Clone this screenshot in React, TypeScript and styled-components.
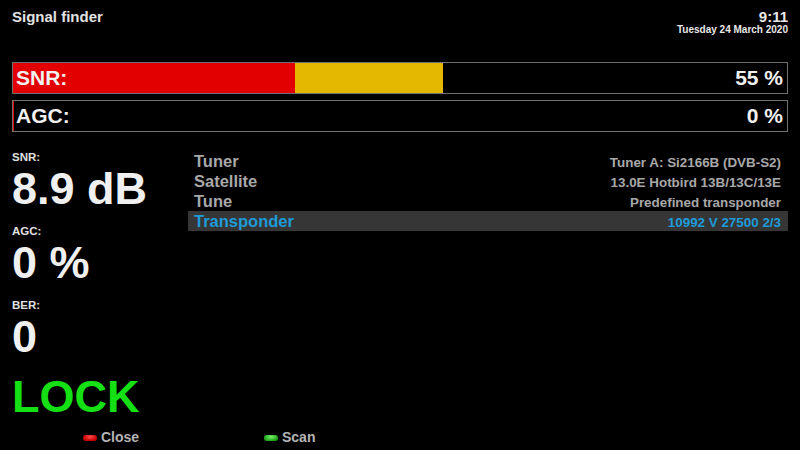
import React from 'react';
import styled, { createGlobalStyle } from 'styled-components';

const GlobalStyle = createGlobalStyle`
  html, body {
    margin: 0;
    padding: 0;
    background: #000;
  }
  body {
    font-family: 'Liberation Sans', Arial, sans-serif;
    font-weight: bold;
  }
`;

const Screen = styled.div`
  display: flex;
  flex-direction: column;
  box-sizing: border-box;
  width: 800px;
  height: 450px;
  padding: 0 12px 6px;
  background: #000;
  color: #e8e8e8;
  overflow: hidden;
`;

const Header = styled.header`
  display: flex;
  justify-content: space-between;
  align-items: flex-start;
  box-sizing: border-box;
  height: 62px;
  padding-top: 9px;
`;

const Title = styled.div`
  font-size: 15px;
  line-height: 15px;
  color: #e2e2e2;
`;

const Clock = styled.div`
  display: flex;
  flex-direction: column;
  align-items: flex-end;
  color: #e8e8e8;
`;

const Time = styled.div`
  font-size: 15px;
  line-height: 15px;
`;

const DateLine = styled.div`
  margin-top: 1px;
  font-size: 10px;
  line-height: 10px;
`;

const Bars = styled.section`
  display: flex;
  flex-direction: column;
  gap: 6px;
`;

const Bar = styled.div`
  position: relative;
  display: flex;
  align-items: center;
  justify-content: space-between;
  box-sizing: border-box;
  height: 32px;
  padding: 0 4px 0 3px;
  border: 1px solid #707070;
  font-size: 21px;
  color: #f0f0f0;
`;

const Track = styled.div`
  position: absolute;
  inset: 0;
  display: flex;
`;

const Segment = styled.div<{ $color: string }>`
  height: 100%;
  background: ${({ $color }) => $color};
`;

const BarText = styled.span`
  position: relative;
`;

const Main = styled.main`
  flex: 1;
  display: grid;
  grid-template-columns: 176px 1fr;
  align-items: start;
  margin-top: 19px;
`;

const Readings = styled.div`
  display: flex;
  flex-direction: column;
  gap: 15px;
  padding-top: 1px;
`;

const Reading = styled.div`
  display: flex;
  flex-direction: column;
  gap: 3px;
`;

const Label = styled.div`
  font-size: 11.5px;
  line-height: 11px;
  color: #e0e0e0;
`;

const Value = styled.div<{ $color?: string }>`
  font-size: 45px;
  line-height: 45px;
  color: ${({ $color }) => $color || '#f0f0f0'};
  white-space: nowrap;
`;

const List = styled.div`
  display: flex;
  flex-direction: column;
`;

const Row = styled.div<{ $active?: boolean }>`
  display: flex;
  justify-content: space-between;
  align-items: baseline;
  height: 20px;
  padding: 0 7px 0 6px;
  background: ${({ $active }) => ($active ? '#363636' : 'transparent')};
  color: ${({ $active }) => ($active ? '#1f9bd8' : '#a8a8a8')};
`;

const RowLabel = styled.span`
  font-size: 16.5px;
  line-height: 20px;
`;

const RowValue = styled.span`
  font-size: 13.4px;
  line-height: 20px;
`;

const Footer = styled.footer`
  display: flex;
  padding-left: 71px;
  height: 14px;
`;

const Key = styled.div`
  display: flex;
  align-items: center;
  gap: 4px;
  width: 181px;
  font-size: 14px;
  line-height: 14px;
  color: #b4b4b4;
`;

const Pill = styled.span<{ $color: 'red' | 'green' }>`
  display: inline-block;
  width: 14px;
  height: 6px;
  margin-top: 1px;
  border-radius: 3px;
  background: ${({ $color }) =>
    $color === 'red'
      ? 'radial-gradient(ellipse at 50% 30%, #ff4a4a, #c40000 70%)'
      : 'radial-gradient(ellipse at 50% 30%, #7cf06a, #1fa51a 70%)'};
`;

const bars = [
  { label: 'SNR:', value: '55 %', red: 282, yellow: 148 },
  { label: 'AGC:', value: '0 %', red: 1, yellow: 0 },
];

const readings = [
  { label: 'SNR:', value: '8.9 dB' },
  { label: 'AGC:', value: '0 %' },
  { label: 'BER:', value: '0' },
];

const rows = [
  { label: 'Tuner', value: 'Tuner A: Si2166B (DVB-S2)' },
  { label: 'Satellite', value: '13.0E Hotbird 13B/13C/13E' },
  { label: 'Tune', value: 'Predefined transponder' },
  { label: 'Transponder', value: '10992 V 27500 2/3', active: true },
];

const App: React.FC = () => (
  <>
    <GlobalStyle />
    <Screen>
      <Header>
        <Title>Signal finder</Title>
        <Clock>
          <Time>9:11</Time>
          <DateLine>Tuesday 24 March 2020</DateLine>
        </Clock>
      </Header>

      <Bars>
        {bars.map((b) => (
          <Bar key={b.label}>
            <Track>
              <Segment $color="#e20000" style={{ width: b.red }} />
              <Segment $color="#e4b700" style={{ width: b.yellow }} />
            </Track>
            <BarText>{b.label}</BarText>
            <BarText>{b.value}</BarText>
          </Bar>
        ))}
      </Bars>

      <Main>
        <Readings>
          {readings.map((r) => (
            <Reading key={r.label}>
              <Label>{r.label}</Label>
              <Value>{r.value}</Value>
            </Reading>
          ))}
          <Value $color="#14e014">LOCK</Value>
        </Readings>
        <List>
          {rows.map((r) => (
            <Row key={r.label} $active={r.active}>
              <RowLabel>{r.label}</RowLabel>
              <RowValue>{r.value}</RowValue>
            </Row>
          ))}
        </List>
      </Main>

      <Footer>
        <Key>
          <Pill $color="red" />
          Close
        </Key>
        <Key>
          <Pill $color="green" />
          Scan
        </Key>
      </Footer>
    </Screen>
  </>
);

export default App;
